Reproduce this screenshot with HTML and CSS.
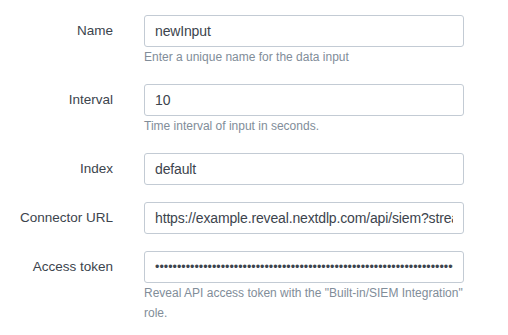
FILE: index.html
```html
<!DOCTYPE html>
<html>
<head>
<meta charset="utf-8">
<link rel="stylesheet" href="styles.css">
</head>
<body>
<form class="form">
  <div class="row">
    <label class="label">Name</label>
    <div class="control">
      <input class="input" type="text" value="newInput">
      <div class="help">Enter a unique name for the data input</div>
    </div>
  </div>
  <div class="row">
    <label class="label">Interval</label>
    <div class="control">
      <input class="input" type="text" value="10">
      <div class="help">Time interval of input in seconds.</div>
    </div>
  </div>
  <div class="row">
    <label class="label">Index</label>
    <div class="control">
      <input class="input" type="text" value="default">
    </div>
  </div>
  <div class="row">
    <label class="label">Connector URL</label>
    <div class="control">
      <input class="input" type="text" value="https://example.reveal.nextdlp.com/api/siem?stream=events">
    </div>
  </div>
  <div class="row">
    <label class="label">Access token</label>
    <div class="control">
      <input class="input input-password" type="password" value="xxxxxxxxxxxxxxxxxxxxxxxxxxxxxxxxxxxxxxxxxxxxxxxxxxxxxxxxxxxxxxxxxxxxxxxxxxxxxx">
      <div class="help">Reveal API access token with the "Built-in/SIEM Integration" role.</div>
    </div>
  </div>
</form>
</body>
</html>
```
FILE: styles.css
```css
html, body {
  margin: 0;
  padding: 0;
  background: #ffffff;
  font-family: "Liberation Sans", Arial, sans-serif;
}

.form {
  padding-top: 15px;
}

.row {
  display: grid;
  grid-template-columns: 113px 320px;
  column-gap: 31px;
  margin-bottom: 17px;
}

.label {
  font-size: 13.5px;
  line-height: 32px;
  color: #3c444d;
  text-align: right;
}

.control {
  display: flex;
  flex-direction: column;
}

.input {
  box-sizing: border-box;
  width: 320px;
  height: 32px;
  margin: 0;
  padding: 0 10px;
  border: 1px solid #c3cbd4;
  border-radius: 3px;
  background: #ffffff;
  font-family: "Liberation Sans", Arial, sans-serif;
  font-size: 14px;
  letter-spacing: -0.15px;
  color: #3c444d;
  outline: none;
}

.input-password {
  font-size: 12.5px;
  letter-spacing: 0;
}

.help {
  font-size: 12px;
  line-height: 20px;
  color: #818d99;
}
```
